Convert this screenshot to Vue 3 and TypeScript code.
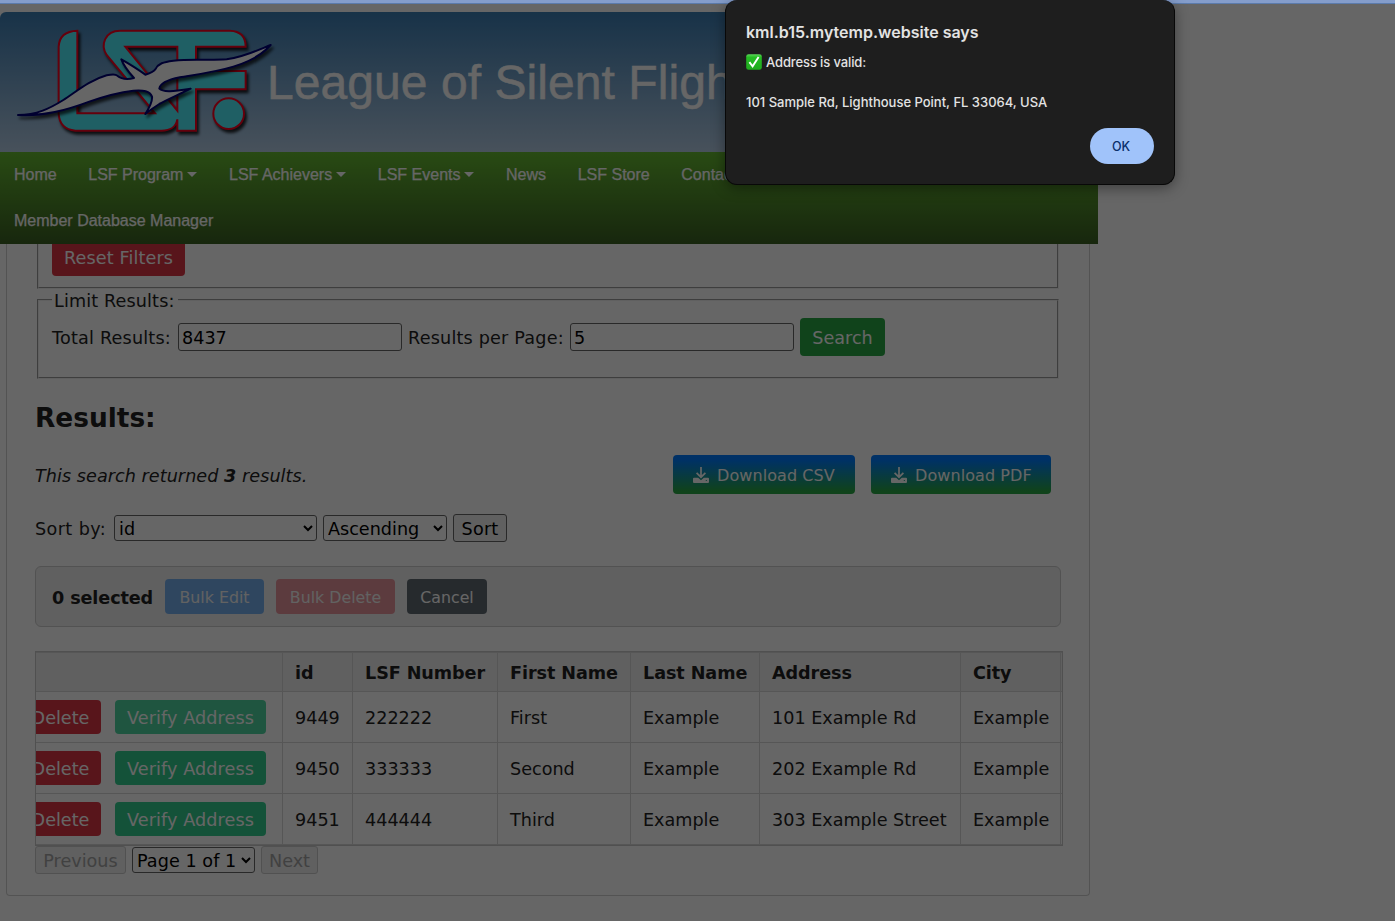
<script setup lang="ts">
import { ref } from 'vue'

interface NavItem {
  label: string
  menu?: boolean
}

interface Member {
  id: number
  lsf: string
  first: string
  last: string
  address: string
  city: string
}

const navItems: NavItem[] = [
  { label: 'Home' },
  { label: 'LSF Program', menu: true },
  { label: 'LSF Achievers', menu: true },
  { label: 'LSF Events', menu: true },
  { label: 'News' },
  { label: 'LSF Store' },
  { label: 'Contact Us' },
]

const columns: string[] = ['id', 'LSF Number', 'First Name', 'Last Name', 'Address', 'City']

const members: Member[] = [
  { id: 9449, lsf: '222222', first: 'First', last: 'Example', address: '101 Example Rd', city: 'Example' },
  { id: 9450, lsf: '333333', first: 'Second', last: 'Example', address: '202 Example Rd', city: 'Example' },
  { id: 9451, lsf: '444444', first: 'Third', last: 'Example', address: '303 Example Street', city: 'Example' },
]

const verifying = ref<number>(9449)
const totalResults = ref<string>('8437')
const perPage = ref<string>('5')
const downloads: string[] = ['CSV', 'PDF']
</script>

<template>
  <div class="window">
    <div class="chrome-edge"></div>
    <div class="page">
      <header class="banner">
        <svg class="logo" viewBox="0 36 900 420" aria-label="LSF logo">
          <g class="letters">
            <path
              fill-rule="evenodd"
              d="M232 92V340H465L320 165C300 135 315 92 360 92H690Q737 94 737 140H588V213H737V268H588V392H532V358C528 380 510 392 485 392H226Q178 388 176 340V140Q178 94 232 92ZM376 140H532V332Z"
            />
            <circle cx="686" cy="341" r="46" />
          </g>
          <path
            class="bird"
            d="M54 345C110 345 150 325 190 300C230 274 270 240 320 226Q345 220 352 227C365 238 385 238 402 234C385 215 372 200 364 178C385 190 410 205 436 224C450 220 462 215 466 208C475 190 490 186 520 182C580 176 620 182 680 178C730 172 775 150 812 135C790 160 750 185 700 200C640 218 580 225 540 232C500 240 480 250 478 266C490 278 520 274 572 266C540 282 500 300 478 312C462 322 450 330 436 342C450 320 458 305 456 290C450 272 430 270 400 272C350 278 310 290 270 304C200 330 130 350 54 345Z"
          />
        </svg>
        <h1>League of Silent Flight</h1>
      </header>

      <nav class="menu">
        <div class="menu-row">
          <a v-for="item in navItems" :key="item.label">
            {{ item.label }}<i v-if="item.menu" class="caret"></i>
          </a>
        </div>
        <div class="menu-row"><a>Member Database Manager</a></div>
      </nav>

      <main class="card">
        <section class="group filters">
          <button class="btn danger reset">Reset Filters</button>
        </section>

        <fieldset class="group limits">
          <legend>Limit Results:</legend>
          <div class="limit-row">
            <label class="total-label">Total Results:</label>
            <input v-model="totalResults" />
            <label class="per-label">Results per Page:</label>
            <input v-model="perPage" />
            <button class="btn success">Search</button>
          </div>
        </fieldset>

        <h2>Results:</h2>

        <div class="summary">
          <em>This search returned <b>3</b> results.</em>
          <div class="downloads">
            <button v-for="kind in downloads" :key="kind" class="download" :class="kind.toLowerCase()">
              <svg viewBox="0 0 16 16" class="dl-icon">
                <path d="M8 0V10M3.600 5.800 8 10.200l4.400-4.400" fill="none" stroke="#fff" stroke-width="1.700" />
                <path
                  fill="#fff"
                  fill-rule="evenodd"
                  d="M1 10.800H5.200L8 13.200l2.800-2.400H15a1 1 0 0 1 1 1V15a1 1 0 0 1-1 1H1a1 1 0 0 1-1-1v-3.200a1 1 0 0 1 1-1ZM12.800 13v1h1v-1Z"
                />
              </svg>
              <span>Download {{ kind }}</span>
            </button>
          </div>
        </div>

        <div class="sorter">
          <span class="sort-label">Sort by:</span>
          <select class="sort-field"><option>id</option></select>
          <select class="sort-dir"><option>Ascending</option></select>
          <button class="native sort-btn">Sort</button>
        </div>

        <div class="bulk">
          <b>0 selected</b>
          <button class="small edit">Bulk Edit</button>
          <button class="small remove">Bulk Delete</button>
          <button class="small cancel">Cancel</button>
        </div>

        <div class="table-wrap">
          <table>
            <colgroup>
              <col class="c-act" /><col class="c-id" /><col class="c-num" /><col class="c-first" />
              <col class="c-last" /><col class="c-addr" /><col class="c-city" /><col />
            </colgroup>
            <thead>
              <tr>
                <th></th>
                <th v-for="c in columns" :key="c">{{ c }}</th>
                <th class="rest"></th>
              </tr>
            </thead>
            <tbody>
              <tr v-for="m in members" :key="m.id">
                <td class="actions">
                  <div class="action-row">
                    <button class="row-btn delete">Delete</button>
                    <button class="row-btn verify" :class="{ busy: m.id === verifying }">Verify Address</button>
                  </div>
                </td>
                <td>{{ m.id }}</td>
                <td>{{ m.lsf }}</td>
                <td>{{ m.first }}</td>
                <td>{{ m.last }}</td>
                <td>{{ m.address }}</td>
                <td>{{ m.city }}</td>
                <td class="rest"></td>
              </tr>
            </tbody>
          </table>
        </div>

        <div class="pager">
          <button class="native prev" disabled>Previous</button>
          <select class="page-select"><option>Page 1 of 1</option></select>
          <button class="native next" disabled>Next</button>
        </div>
      </main>
      <div class="scrim"></div>
    </div>

    <div class="dialog" role="alertdialog">
      <strong>kml.b15.mytemp.website says</strong>
      <p class="valid">
        <svg viewBox="0 0 16 16" class="check">
          <defs>
            <linearGradient id="checkFill" x1="0" y1="0" x2="0" y2="1">
              <stop offset="0" stop-color="#5fd85c" />
              <stop offset=".2" stop-color="#25bd24" />
              <stop offset="1" stop-color="#1faa1e" />
            </linearGradient>
          </defs>
          <rect x=".2" y=".2" width="15.600" height="15.600" rx="2.400" fill="url(#checkFill)" />
          <path d="M3.400 8.200 6.600 12.300 12.600 3" fill="none" stroke="#fff" stroke-width="1.900" />
        </svg>
        <span>Address is valid:</span>
      </p>
      <p class="found">101 Sample Rd, Lighthouse Point, FL 33064, USA</p>
      <button class="ok">OK</button>
    </div>
  </div>
</template>

<style>
body {
  margin: 0;
  background: #666;
}
</style>

<style scoped>
.window {
  position: relative;
  width: 1395px;
  height: 921px;
  overflow: hidden;
  font-family: Verdana, 'DejaVu Sans', sans-serif;
  font-size: 17.6px;
  color: #222;
}
.window *,
.window {
  box-sizing: border-box;
}
button,
input,
select {
  font: inherit;
  margin: 0;
}
button {
  white-space: nowrap;
}
.chrome-edge {
  height: 4px;
  background: #849dcb;
  border-bottom: 1px solid #5c7bab;
}
.page {
  position: relative;
  height: 917px;
  padding-top: 8px;
  background: #fff;
}
.scrim {
  position: absolute;
  inset: 0;
  background: rgba(0, 0, 0, 0.6);
}
.banner {
  display: flex;
  width: 1098px;
  height: 140px;
  border-top-left-radius: 6px;
  background: linear-gradient(#3c7eb4, #b4cce4);
  overflow: hidden;
}
.logo {
  flex: none;
  width: 300px;
  height: 140px;
  margin-right: -33px;
}
.letters {
  fill: #4eeefa;
  stroke: #fa0020;
  stroke-width: 6;
  filter: drop-shadow(6px 9px 5px rgba(0, 0, 0, 0.8));
}
.bird {
  fill: #fff;
  stroke: #000078;
  stroke-width: 6;
  stroke-linejoin: round;
  filter: drop-shadow(6px 9px 5px rgba(0, 0, 0, 0.7));
}
.banner h1 {
  margin: 43px 0 0;
  font: 400 48px/55px Arial, 'Liberation Sans', sans-serif;
  letter-spacing: 0.06px;
  color: #fff;
  -webkit-text-stroke: 0.5px #fff;
  white-space: nowrap;
}
.menu {
  width: 1098px;
  height: 92px;
  padding-left: 14px;
  background: linear-gradient(#66ba32, #3b6122);
  font: 16px/45px Arial, 'Liberation Sans', sans-serif;
  color: #fff;
  -webkit-text-stroke: 0.25px #fff;
}
.menu-row {
  display: flex;
  gap: 31.6px;
  height: 46px;
  white-space: nowrap;
}
.menu-row a {
  display: flex;
  align-items: center;
  height: 45px;
}
.caret {
  margin-left: 4px;
  border: 5px solid transparent;
  border-top-color: #fff;
  border-bottom: 0;
}
.card {
  width: 1084px;
  height: 652px;
  margin-left: 6px;
  padding: 0 28px;
  border: 1px solid #d0d0d0;
  border-top: 0;
  border-radius: 0 0 4px 4px;
}
.group {
  width: 1022px;
  margin: 0 2px;
  border: 2px groove #f0f0f0;
}
.filters {
  height: 45px;
  padding: 0 13px;
  border-top: 0;
}
.btn {
  border: 0;
  border-radius: 4px;
  color: #fff;
  padding: 0;
}
.danger {
  background: #dc3545;
}
.reset {
  width: 133px;
  height: 32px;
  padding-bottom: 4px;
  border-radius: 0 0 4px 4px;
  letter-spacing: 0.13px;
}
.success {
  width: 85px;
  height: 38px;
  margin-left: 6px;
  padding-top: 2px;
  background: #28a745;
}
.limits {
  height: 89px;
  margin-top: 1px;
  padding: 0 13px;
}
.limits legend {
  width: 126px;
  height: 20px;
  padding: 0 2px;
  line-height: 22px;
  letter-spacing: 0.13px;
  white-space: nowrap;
}
.limit-row {
  display: flex;
  align-items: center;
  margin-top: 8px;
}
.limit-row label {
  padding-top: 2px;
  letter-spacing: 0.2px;
  white-space: nowrap;
}
.total-label {
  width: 126px;
}
.per-label {
  width: 162px;
  margin-left: 6px;
}
.limit-row input {
  width: 224px;
  height: 28px;
  padding: 2px 3px 0;
  border: 1px solid #686868;
  border-radius: 3px;
  background: #fff;
  color: #000;
}
h2 {
  height: 32px;
  margin: 23px 0 0;
  font-size: 26.4px;
  line-height: 32px;
}
.summary {
  display: flex;
  align-items: center;
  justify-content: space-between;
  width: 1016px;
  height: 39px;
  margin-top: 21px;
}
.summary em {
  padding-top: 2px;
  letter-spacing: 0.05px;
}
.downloads {
  display: flex;
  gap: 16px;
}
.download {
  display: flex;
  align-items: center;
  gap: 8px;
  height: 39px;
  padding: 2px 0 0 20px;
  border: 0;
  border-radius: 4px;
  background: linear-gradient(#007bff 12%, #28a745 92%);
  font-size: 16px;
  letter-spacing: 0.08px;
  color: #fff;
}
.csv {
  width: 182px;
}
.pdf {
  width: 180px;
}
.dl-icon {
  width: 16px;
  height: 16px;
  margin-top: -1px;
}
.sorter {
  display: flex;
  align-items: center;
  height: 28px;
  margin-top: 20px;
}
.sort-label {
  width: 79px;
  padding-top: 2px;
  letter-spacing: 0.4px;
}
select {
  height: 26px;
  padding: 2px 0 0;
  border: 1px solid #686868;
  border-radius: 3px;
  background: #fff;
  color: #000;
}
.sort-field {
  width: 203px;
}
.sort-dir {
  width: 124px;
  margin-left: 6px;
}
.native {
  height: 28px;
  padding: 2px 0 0;
  border: 1px solid #686868;
  border-radius: 3px;
  background: #efefef;
  color: #000;
}
.native:disabled {
  border-color: #cbcbcb;
  color: #a3a3a3;
}
.sort-btn {
  width: 54px;
  margin-left: 6px;
  letter-spacing: 0.2px;
}
.bulk {
  display: flex;
  align-items: center;
  gap: 12px;
  width: 1026px;
  height: 61px;
  margin-top: 24px;
  padding: 0 16px;
  border: 1px solid #ccc;
  border-radius: 6px;
  background: #f0f0f0;
}
.bulk b {
  width: 101px;
  padding-top: 2px;
  letter-spacing: -0.1px;
  white-space: nowrap;
}
.small {
  height: 35px;
  padding: 2px 0 0;
  border: 0;
  border-radius: 4px;
  font-size: 15.8px;
  color: #fff;
}
.edit {
  width: 99px;
  background: #77b0ee;
  color: #f4f4f4;
}
.remove {
  width: 119px;
  background: #e6949b;
  color: #f4f4f4;
}
.cancel {
  width: 80px;
  background: #5f6a72;
}
.table-wrap {
  width: 1028px;
  height: 195px;
  margin-top: 24px;
  border: 1px solid #c8c8c8;
  overflow: hidden;
}
table {
  width: 1026px;
  table-layout: fixed;
  border-collapse: separate;
  border-spacing: 0;
  border-top: 1px solid #d6d6d6;
}
.c-act {
  width: 247px;
}
.c-id {
  width: 70px;
}
.c-num {
  width: 145px;
}
.c-first {
  width: 133px;
}
.c-last {
  width: 129px;
}
.c-addr {
  width: 201px;
}
.c-city {
  width: 100px;
}
th,
td {
  padding: 2px 0 0 12px;
  border: solid #d8d8d8;
  border-width: 0 1px 1px 0;
  text-align: left;
  white-space: nowrap;
}
th.rest,
td.rest {
  padding: 0;
  border-right: 0;
}
th {
  height: 39px;
  letter-spacing: -0.08px;
  background: #f0f0f0;
}
td {
  height: 51px;
}
td.actions {
  padding: 0;
}
.action-row {
  display: flex;
  justify-content: flex-end;
  gap: 14px;
  padding-right: 16px;
  overflow: hidden;
}
.row-btn {
  flex: none;
  height: 34px;
  padding: 2px 0 0;
  border: 0;
  border-radius: 4px;
  color: #fff;
}
.delete {
  width: 79px;
  padding-right: 2px;
  background: #dc3545;
}
.verify {
  width: 151px;
  letter-spacing: 0.1px;
  background: #34cd8f;
}
.verify.busy {
  background: #4ed5a0;
}
.pager {
  display: flex;
  align-items: center;
  gap: 6px;
}
.prev {
  width: 91px;
}
.page-select {
  width: 123px;
  letter-spacing: 0.05px;
}
.next {
  width: 57px;
}
.dialog {
  position: absolute;
  top: 0;
  left: 725px;
  width: 450px;
  height: 185px;
  border: 1px solid #080808;
  border-top: 0;
  border-radius: 12px;
  padding: 22px 20px 0;
  background: #1e1e1e;
  box-shadow: 0 3px 14px rgba(0, 0, 0, 0.4);
  font-family: Inter, sans-serif;
  color: #e3e3e3;
}
.dialog strong {
  display: block;
  font-size: 16px;
  font-weight: 600;
  line-height: 20px;
}
.dialog p {
  margin: 0;
  font-size: 13px;
  font-weight: 500;
  line-height: 20px;
  white-space: nowrap;
}
.dialog .valid {
  display: flex;
  align-items: center;
  gap: 4px;
  margin-top: 10px;
  letter-spacing: -0.12px;
}
.dialog .found {
  margin-top: 20px;
}
.check {
  width: 16px;
  height: 16px;
}
.ok {
  display: block;
  width: 64px;
  height: 36px;
  margin: 16px 0 0 auto;
  padding: 0 2px 0 0;
  border: 0;
  border-radius: 18px;
  background: #a0c3fa;
  color: #0a2f6b;
  font-size: 12.500px;
  font-weight: 500;
}
</style>
